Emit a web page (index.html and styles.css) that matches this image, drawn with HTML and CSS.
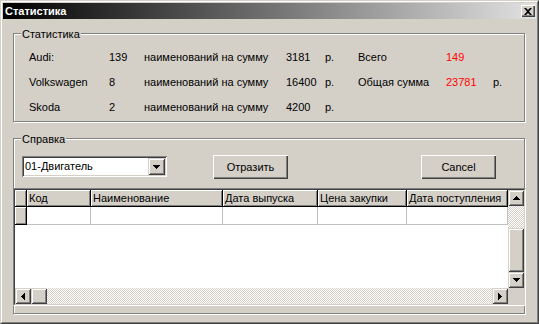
FILE: index.html
```html
<!DOCTYPE html>
<html>
<head>
<meta charset="utf-8">
<link rel="stylesheet" href="styles.css">
</head>
<body>
<div class="window">
  <div class="frame">
    <div class="titlebar">
      <span class="title">Статистика</span>
      <button class="close"><svg width="8" height="7" viewBox="0 0 8 7"><path d="M0 0h2l2 2 2-2h2L5 3.5 8 7H6L4 5 2 7H0l3-3.5z" fill="#000"/></svg></button>
    </div>
    <div class="content">
      <section class="group stats">
        <span class="legend">Статистика</span>
        <div class="stats-grid">
          <span>Audi:</span><span>139</span><span>наименований на сумму</span><span>3181</span><span>р.</span><span>Всего</span><span class="red">149</span><span></span>
          <span>Volkswagen</span><span>8</span><span>наименований на сумму</span><span>16400</span><span>р.</span><span>Общая сумма</span><span class="red">23781</span><span>р.</span>
          <span>Skoda</span><span>2</span><span>наименований на сумму</span><span>4200</span><span>р.</span><span></span><span></span><span></span>
        </div>
      </section>
      <section class="group ref">
        <span class="legend">Справка</span>
        <div class="toolbar">
          <div class="combo">
            <span class="combo-text">01-Двигатель</span>
            <span class="combo-btn raised"><svg width="7" height="4" viewBox="0 0 7 4"><path d="M0 0h7v1H0zM1 1h5v1H1zM2 2h3v1H2zM3 3h1v1H3z" fill="#000"/></svg></span>
          </div>
          <button class="btn btn-show">Отразить</button>
          <button class="btn btn-cancel">Cancel</button>
        </div>
        <div class="dbgrid">
          <div class="dbgrid-in">
            <div class="table">
              <div class="hc"></div>
              <div class="hc">Код</div>
              <div class="hc">Наименование</div>
              <div class="hc">Дата выпуска</div>
              <div class="hc">Цена закупки</div>
              <div class="hc">Дата поступления</div>
              <div class="hc"></div>
              <div class="dc"></div>
              <div class="dc"></div>
              <div class="dc"></div>
              <div class="dc"></div>
              <div class="dc"></div>
            </div>
            <div class="vscroll">
              <span class="sbtn raised"><svg width="7" height="4" viewBox="0 0 7 4"><path d="M3 0h1v1H3zM2 1h3v1H2zM1 2h5v1H1zM0 3h7v1H0z" fill="#000"/></svg></span>
              <span class="track"></span>
              <span class="sbtn raised"></span>
              <span class="sbtn raised"><svg width="7" height="4" viewBox="0 0 7 4"><path d="M0 0h7v1H0zM1 1h5v1H1zM2 2h3v1H2zM3 3h1v1H3z" fill="#000"/></svg></span>
            </div>
            <div class="hscroll">
              <span class="sbtn raised"><svg width="4" height="7" viewBox="0 0 4 7"><path d="M0 3h1v1H0zM1 2h1v3H1zM2 1h1v5H2zM3 0h1v7H3z" fill="#000"/></svg></span>
              <span class="sbtn raised"></span>
              <span class="track"></span>
              <span class="sbtn raised"><svg width="4" height="7" viewBox="0 0 4 7"><path d="M0 0h1v7H0zM1 1h1v5H1zM2 2h1v3H2zM3 3h1v1H3z" fill="#000"/></svg></span>
            </div>
            <div class="corner"></div>
          </div>
        </div>
      </section>
    </div>
  </div>
</div>
</body>
</html>
```
FILE: styles.css
```css
body {
  margin: 0;
  font: 11px "Liberation Sans", Arial, sans-serif;
  color: #000;
}

.window {
  width: 539px;
  height: 324px;
  box-sizing: border-box;
  border: 1px solid;
  border-color: #d4d0c8 #404040 #404040 #d4d0c8;
  background: #d4d0c8;
}

.frame {
  height: 100%;
  box-sizing: border-box;
  border: 1px solid;
  border-color: #fff #808080 #808080 #fff;
  padding: 1px;
}

.titlebar {
  height: 16px;
  display: flex;
  align-items: center;
  justify-content: space-between;
  padding: 0 1px 0 2px;
  background: linear-gradient(to right, #000, #e2e2e2);
}

.title {
  color: #fff;
  font-weight: bold;
  line-height: 13px;
}

.close {
  width: 14px;
  height: 12px;
  padding: 0;
  border: 0;
  background: #d4d0c8;
  box-shadow: inset 1px 1px #fff, inset -1px -1px #404040, inset -2px -2px #808080;
  display: flex;
  align-items: center;
  justify-content: center;
}

.content {
  padding: 14px 0 0 10px;
}

.group {
  position: relative;
  box-sizing: border-box;
  width: 512px;
  border: 1px solid #808080;
  box-shadow: inset 1px 1px #fff, 1px 1px #fff;
}

.legend {
  position: absolute;
  top: -6px;
  left: 7px;
  padding: 0 1px;
  background: #d4d0c8;
  line-height: 13px;
}

.stats {
  height: 89px;
  padding: 17px 0 0 15px;
}

.stats-grid {
  display: grid;
  grid-template-columns: 80px 35px 142px 39px 33px 88px 47px auto;
  row-gap: 12px;
  line-height: 13px;
  white-space: nowrap;
}

.red {
  color: #f00;
}

.ref {
  height: 176px;
  margin-top: 16px;
}

.toolbar {
  display: flex;
  align-items: flex-start;
  padding: 16px 0 0 8px;
}

.raised {
  background: #d4d0c8;
  box-shadow: inset 1px 1px #d4d0c8, inset -1px -1px #404040, inset 2px 2px #fff, inset -2px -2px #808080;
  display: flex;
  align-items: center;
  justify-content: center;
  box-sizing: border-box;
}

.combo {
  margin-top: 1px;
  width: 145px;
  height: 21px;
  box-sizing: border-box;
  padding: 2px;
  background: #fff;
  box-shadow: inset 1px 1px #808080, inset -1px -1px #fff, inset 2px 2px #404040, inset -2px -2px #d4d0c8;
  display: flex;
  align-items: center;
}

.combo-text {
  flex: 1;
  padding-left: 1px;
  line-height: 13px;
}

.combo-btn {
  width: 17px;
  height: 17px;
}

.btn {
  width: 75px;
  height: 24px;
  padding: 0;
  border: 0;
  font: inherit;
  color: #000;
  background: #d4d0c8;
  box-shadow: inset 1px 1px #fff, inset -1px -1px #404040, inset -2px -2px #808080;
}

.btn-show {
  margin-left: 46px;
}

.btn-cancel {
  margin-left: 133px;
}

.dbgrid {
  margin: 9px 0 0 -1px;
  width: 513px;
  height: 118px;
  box-sizing: border-box;
  border: 1px solid;
  border-color: #808080 #fff #fff #808080;
}

.dbgrid-in {
  height: 100%;
  box-sizing: border-box;
  border: 1px solid;
  border-color: #404040 #d4d0c8 #d4d0c8 #404040;
  display: grid;
  grid-template-columns: 493px 16px;
  grid-template-rows: 98px 16px;
  background: #fff;
}

.table {
  display: grid;
  grid-template-columns: 12px 64px 132px 95px 89px 101px;
  grid-template-rows: 17px 18px;
  align-content: start;
}

.hc {
  box-sizing: border-box;
  background: #d4d0c8;
  border-right: 1px solid #000;
  border-bottom: 1px solid #000;
  box-shadow: inset 1px 1px #fff, inset -1px -1px #808080;
  padding-left: 2px;
  line-height: 16px;
  white-space: nowrap;
  overflow: hidden;
}

.dc {
  box-sizing: border-box;
  background: #fff;
  border-right: 1px solid #c0c0c0;
  border-bottom: 1px solid #c0c0c0;
}

.vscroll {
  display: grid;
  grid-template-rows: 16px 22px 44px 16px;
}

.hscroll {
  display: grid;
  grid-template-columns: 16px 16px 1fr 16px;
}

.track {
  background: repeating-conic-gradient(#d4d0c8 0 25%, #fff 0 50%) 0 0 / 2px 2px;
}

.corner {
  background: #d4d0c8;
}
```
